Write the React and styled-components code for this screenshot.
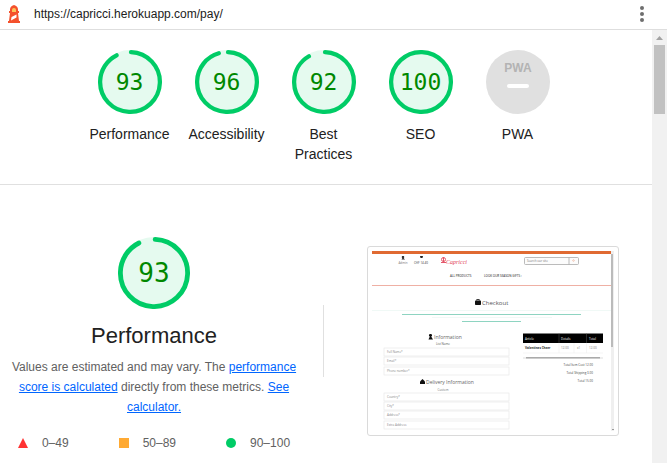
import React from "react";
import styled, { createGlobalStyle } from "styled-components";

const GlobalStyle = createGlobalStyle`
  *, *::before, *::after { box-sizing: border-box; }
  body {
    margin: 0;
    background: #fff;
    color: #212121;
    font-family: "Liberation Sans", Arial, sans-serif;
    font-size: 14px;
    line-height: 20px;
  }
`;

const Page = styled.div`
  display: flex;
  flex-direction: column;
  min-height: 100vh;
`;

const TopBar = styled.header`
  display: flex;
  align-items: center;
  height: 30px;
  padding: 0 16px 1px 8px;
  border-bottom: 1px solid #dedede;
`;

const ReportUrl = styled.span`
  flex: 1;
  margin-left: 14px;
  font-size: 12px;
  color: #212121;
`;

const MenuButton = styled.button`
  display: flex;
  padding: 0;
  border: 0;
  background: none;
  cursor: pointer;
`;

const Viewport = styled.div`
  display: flex;
  flex: 1;
`;

const Report = styled.main`
  flex: 1;
  min-width: 0;
`;

const ScrollTrack = styled.div`
  display: flex;
  flex-direction: column;
  align-items: center;
  width: 15px;
  background: #f1f1f1;
`;

const ScrollArrow = styled.svg`
  display: block;
  width: 15px;
  height: 15px;
`;

const ScrollThumb = styled.div`
  width: 11px;
  height: 69px;
  background: #c1c1c1;
`;

const Scores = styled.nav`
  display: flex;
  justify-content: center;
  padding: 20px 5px 20px 0;
  border-bottom: 1px solid #e0e0e0;
`;

const ScoreLink = styled.a`
  display: flex;
  flex-direction: column;
  align-items: center;
  width: 97px;
  padding: 0 8px;
  color: inherit;
  text-align: center;
  text-decoration: none;
`;

const ScoreLabel = styled.span`
  margin-top: 10px;
`;

const Dial = styled.div`
  display: grid;
  place-items: center;
  width: ${(p) => (p.$large ? 72 : 64)}px;
  height: ${(p) => (p.$large ? 72 : 64)}px;
  color: #080;
  font-family: "DejaVu Sans Mono", monospace;
  font-size: ${(p) => (p.$large ? 26 : 23)}px;

  > * { grid-area: 1 / 1; }
`;

const DialRing = styled.svg`
  width: 100%;
  height: 100%;
`;

const PwaBadge = styled.svg`
  width: 64px;
  height: 64px;
`;

const Category = styled.section`
  display: grid;
  grid-template-columns: 1fr 1px 1fr;
  column-gap: 15px;
  align-items: center;
  padding: 44px 5px 0 0;
`;

const Summary = styled.div`
  display: flex;
  flex-direction: column;
  align-items: center;
  padding-top: 8px;
`;

const Title = styled.h1`
  margin: 13px 0 7px;
  font-size: 22px;
  font-weight: 400;
  line-height: 28px;
`;

const Description = styled.p`
  margin: 0;
  color: #616161;
  font-size: 12px;
  text-align: center;
`;

const TextLink = styled.a`
  color: #06f;
`;

const Legend = styled.ul`
  display: flex;
  justify-content: center;
  gap: 50px;
  margin: 16px 0 0;
  padding: 0;
  color: #616161;
  font-size: 12px;
  list-style: none;
`;

const LegendItem = styled.li`
  display: flex;
  align-items: center;
  gap: 14px;
  white-space: nowrap;
`;

const Marker = styled.svg`
  width: 10px;
  height: 10px;
`;

const Divider = styled.div`
  height: 72px;
  background: #e0e0e0;
`;

const Screenshot = styled.figure`
  justify-self: center;
  width: 100%;
  max-width: 252px;
  margin: 0;
  padding: 4px;
  border: 1px solid #dadada;
  border-radius: 3px;
`;

const ScreenshotImage = styled.svg`
  display: block;
  width: 100%;
  height: auto;
`;

const RADIUS = 56;
const CIRCUMFERENCE = 2 * Math.PI * RADIUS;

function Gauge({ score, large }) {
  const arc = score === 100 ? CIRCUMFERENCE : (score / 100) * CIRCUMFERENCE - 4;
  return (
    <Dial $large={large}>
      <DialRing viewBox="0 0 120 120" aria-hidden="true">
        <circle cx="60" cy="60" r="60" fill="#e5faef" />
        <circle
          cx="60"
          cy="60"
          r={RADIUS}
          fill="none"
          stroke="#0c6"
          strokeWidth="8"
          strokeLinecap="round"
          strokeDasharray={`${arc} ${CIRCUMFERENCE}`}
          transform="rotate(-88 60 60)"
        />
      </DialRing>
      <span>{score}</span>
    </Dial>
  );
}

function LighthouseIcon() {
  return (
    <svg width="12" height="18" viewBox="0 0 12 18" aria-hidden="true">
      <path d="M6 0Q10 1 10 4.500V6h1v2h-1l1 8h1v2H0v-2h1l1-8H1V6h1V4.500Q2 1 6 0z" fill="#f4512c" />
      <path d="M4 5Q4 3 6 3T8 5V7H4z" fill="#fbc45b" />
      <path d="M3.500 12 8.500 9.500V12.500L3 15.500z" fill="#fff" />
    </svg>
  );
}

function PwaGauge() {
  return (
    <PwaBadge viewBox="0 0 64 64" aria-hidden="true">
      <circle cx="32" cy="32" r="32" fill="#e0e0e0" />
      <text
        x="32"
        y="22"
        textAnchor="middle"
        fontFamily="Liberation Sans, sans-serif"
        fontSize="12"
        fontWeight="700"
        fill="#b3b3b3"
      >
        PWA
      </text>
      <rect x="21" y="34" width="22" height="4" rx="2" fill="#fff" />
    </PwaBadge>
  );
}

const infoFields = [
  { y: 97, label: "Full Name*" },
  { y: 106, label: "Email*" },
  { y: 116, label: "Phone number*" },
  { y: 142, label: "Country*" },
  { y: 151, label: "City*" },
  { y: 160, label: "Address*" },
  { y: 170, label: "Extra Address" },
];

const totals = [
  { y: 115, label: "Total Item Cost 12.00" },
  { y: 123, label: "Total Shipping 3.00" },
  { y: 131, label: "Total 15.00" },
];

function CheckoutThumbnail() {
  return (
    <ScreenshotImage
      viewBox="0 0 242 180"
      role="img"
      aria-label="Checkout page"
      fontFamily="Open Sans, sans-serif"
      fontSize="3"
      fill="#777"
    >
      <rect width="239" height="3" fill="#e06a32" />
      <rect x="239" width="3" height="180" fill="#efefef" />
      <rect x="239" y="3" width="2" height="93" fill="#bbb" />
      <path d="M240 178h2l-1 1z" fill="#444" />

      <path d="M31 5a1 1 0 0 1 .5 2L33 8.500H29.500L30.500 7A1 1 0 0 1 31 5z" fill="#222" />
      <text x="31" y="13" textAnchor="middle">Admin</text>
      <path d="M48 5h3l-.5 2h-2z" fill="#222" />
      <text x="49" y="13" textAnchor="middle" fill="#333">CHF 14.40</text>

      <g fill="none" stroke="#e4566a" strokeWidth="1">
        <circle cx="71.500" cy="8.500" r="2" />
        <path d="M69 11.500h5M71.500 6v5" />
      </g>
      <text x="74" y="13" fontFamily="Liberation Serif, serif" fontStyle="italic" fontSize="6" fill="#df3f58">
        Capricci
      </text>

      <rect x="152.500" y="6.500" width="54" height="7" rx="1" fill="#fcfcfc" stroke="#aaa" strokeWidth=".8" />
      <path d="M197 6.500v7" stroke="#aaa" strokeWidth=".8" />
      <text x="155" y="11">Search our site</text>
      <circle cx="201.500" cy="9.500" r=".8" fill="none" stroke="#e99c7d" strokeWidth=".5" />

      <g fill="#111">
        <text x="78" y="26">ALL PRODUCTS</text>
        <text x="112" y="26">LOOK OUR SEASON GIFTS ›</text>
      </g>
      <path d="M0 34.500h239" stroke="#efb0a4" strokeWidth="1" />

      <rect x="103" y="49.500" width="6" height="4.500" rx=".7" fill="#111" />
      <path d="M104.700 49.500v-1h2.600v1" fill="none" stroke="#111" strokeWidth=".8" />
      <text x="110" y="54" fontSize="6" fill="#555">Checkout</text>

      <path d="M0 59.500h239M60 66.500h120" stroke="#eaf6f2" strokeWidth=".7" />
      <path d="M30 63.500h179M90 70.500h59" stroke="#8ed4c1" strokeWidth="1" />

      <path d="M58.500 83a1.300 1.300 0 0 1 .7 2.500L61 88.500H56.500L57.800 85.500A1.300 1.300 0 0 1 58.500 83z" fill="#111" />
      <text x="62" y="88" fontSize="5" fill="#666">Information</text>
      <text x="71" y="94" textAnchor="middle" fill="#555">List Name</text>

      <path d="M48 130.500 50.500 128 53 130.500V133H48z" fill="#111" />
      <text x="54" y="133" fontSize="5" fill="#666">Delivery Information</text>
      <text x="71" y="140" textAnchor="middle">Custom</text>

      {infoFields.map((field) => (
        <g key={field.label}>
          <rect x="12" y={field.y} width="125" height="8" fill="none" stroke="#e8e8e8" strokeWidth=".7" />
          <text x="15" y={field.y + 5} fill="#888">{field.label}</text>
        </g>
      ))}

      <rect x="151" y="82.500" width="80" height="9.500" fill="#000" />
      <path d="M187 82.500v9.500M214.500 82.500v9.500" stroke="#555" strokeWidth=".5" />
      <g fill="#fff">
        <text x="153" y="89">Article</text>
        <text x="189" y="89">Details</text>
        <text x="217" y="89">Total</text>
      </g>
      <text x="153" y="98" fontWeight="700" fill="#222">Valentines Cheer</text>
      <text x="189" y="98">12.00</text>
      <text x="205" y="98">x1</text>
      <text x="217" y="98">12.00</text>
      <path d="M151 102h80M187 92v10M202 92v10M214.500 92v10" stroke="#eee" strokeWidth=".6" />
      <rect x="151" y="106" width="80" height="2" fill="#eee" />
      <rect x="154" y="106" width="74" height="1.500" fill="#aaa" />

      {totals.map((total) => (
        <text key={total.label} x="221" y={total.y} textAnchor="end" fill="#444">
          {total.label}
        </text>
      ))}
    </ScreenshotImage>
  );
}

const scores = [
  { label: "Performance", href: "#performance", score: 93 },
  { label: "Accessibility", href: "#accessibility", score: 96 },
  { label: "Best Practices", href: "#best-practices", score: 92 },
  { label: "SEO", href: "#seo", score: 100 },
  { label: "PWA", href: "#pwa" },
];

export default function App() {
  return (
    <Page>
      <GlobalStyle />
      <TopBar>
        <LighthouseIcon />
        <ReportUrl>https://capricci.herokuapp.com/pay/</ReportUrl>
        <MenuButton type="button" aria-label="Tools menu">
          <svg width="18" height="18" viewBox="0 0 18 18" fill="#6e6e6e" aria-hidden="true">
            <circle cx="9" cy="3" r="2" />
            <circle cx="9" cy="9" r="2" />
            <circle cx="9" cy="15" r="2" />
          </svg>
        </MenuButton>
      </TopBar>
      <Viewport>
        <Report>
          <Scores aria-label="Categories">
            {scores.map(({ label, href, score }) => (
              <ScoreLink key={label} href={href}>
                {score === undefined ? <PwaGauge /> : <Gauge score={score} />}
                <ScoreLabel>{label}</ScoreLabel>
              </ScoreLink>
            ))}
          </Scores>
          <Category id="performance">
            <Summary>
              <Gauge score={93} large />
              <Title>Performance</Title>
              <Description>
                Values are estimated and may vary. The{" "}
                <TextLink href="#scoring">performance score is calculated</TextLink>{" "}
                directly from these metrics.{" "}
                <TextLink href="#calculator">See calculator.</TextLink>
              </Description>
              <Legend>
                <LegendItem>
                  <Marker viewBox="0 0 10 10" aria-hidden="true">
                    <path d="M5 0 10 10H0z" fill="#f33" />
                  </Marker>
                  0–49
                </LegendItem>
                <LegendItem>
                  <Marker viewBox="0 0 10 10" aria-hidden="true">
                    <rect width="10" height="10" fill="#fa3" />
                  </Marker>
                  50–89
                </LegendItem>
                <LegendItem>
                  <Marker viewBox="0 0 10 10" aria-hidden="true">
                    <circle cx="5" cy="5" r="5" fill="#0c6" />
                  </Marker>
                  90–100
                </LegendItem>
              </Legend>
            </Summary>
            <Divider />
            <Screenshot>
              <CheckoutThumbnail />
            </Screenshot>
          </Category>
        </Report>
        <ScrollTrack aria-hidden="true">
          <ScrollArrow viewBox="0 0 15 15">
            <path d="M7.500 6 11 10H4z" fill="#a3a3a3" />
          </ScrollArrow>
          <ScrollThumb />
        </ScrollTrack>
      </Viewport>
    </Page>
  );
}
